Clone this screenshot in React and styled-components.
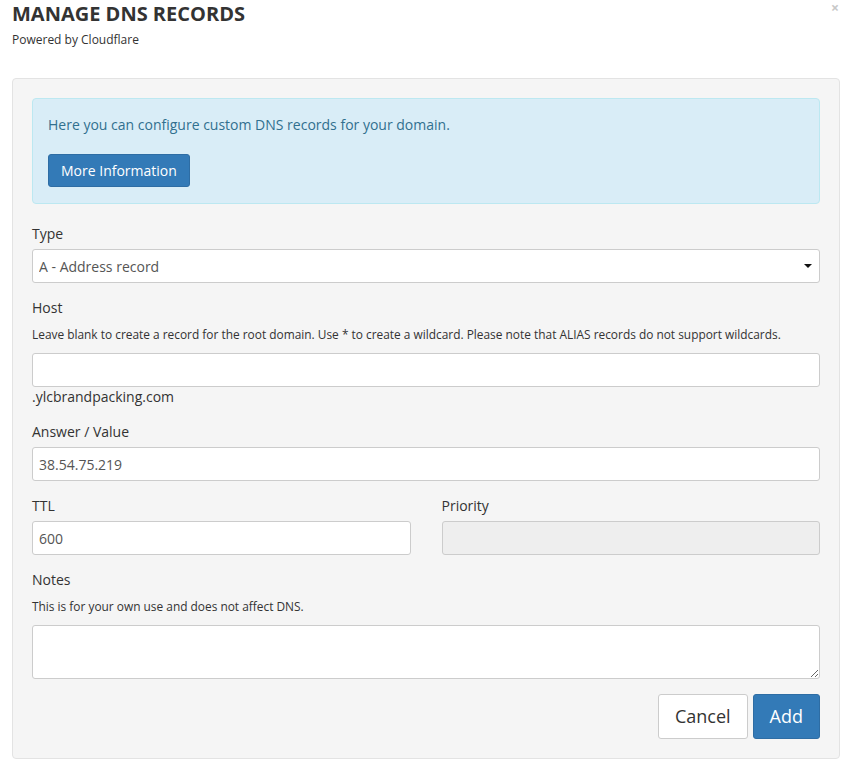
import React from 'react'
import styled, { createGlobalStyle } from 'styled-components'

const GlobalStyle = createGlobalStyle`
  html, body {
    margin: 0;
    padding: 0;
    background: #fff;
    font-family: "Open Sans", "Liberation Sans", sans-serif;
    color: #333;
  }
  * { box-sizing: border-box; }
`

const App = () => {
    return (<>
    <GlobalStyle />
    <Modal>
        <Header>
            <Title>MANAGE DNS RECORDS</Title>
            <SubTitle>Powered by Cloudflare</SubTitle>
            <Close>×</Close>
        </Header>
        <Panel>
            <Alert>
                <AlertText>Here you can configure custom DNS records for your domain.</AlertText>
                <Button primary>More Information</Button>
            </Alert>

            <Group>
                <Label>Type</Label>
                <SelectWrap>
                    <Select defaultValue="A">
                        <option value="A">A - Address record</option>
                        <option value="AAAA">AAAA - IPv6 address record</option>
                        <option value="CNAME">CNAME - Canonical name record</option>
                        <option value="MX">MX - Mail exchange record</option>
                        <option value="TXT">TXT - Text record</option>
                    </Select>
                </SelectWrap>
            </Group>

            <Group>
                <Label>Host</Label>
                <Help>Leave blank to create a record for the root domain. Use * to create a wildcard. Please note that ALIAS records do not support wildcards.</Help>
                <Input type="text" defaultValue="" />
                <Suffix>.ylcbrandpacking.com</Suffix>
            </Group>

            <Group>
                <Label>Answer / Value</Label>
                <Input type="text" defaultValue="38.54.75.219" />
            </Group>

            <Row>
                <Group>
                    <Label>TTL</Label>
                    <Input type="text" defaultValue="600" />
                </Group>
                <Group>
                    <Label>Priority</Label>
                    <Input type="text" disabled defaultValue="" />
                </Group>
            </Row>

            <Group>
                <Label>Notes</Label>
                <Help>This is for your own use and does not affect DNS.</Help>
                <TextArea />
            </Group>

            <Actions>
                <Button large>Cancel</Button>
                <Button large primary>Add</Button>
            </Actions>
        </Panel>
    </Modal>
    </>)
}
export default App

const Modal = styled.div`
    width: 850px;
    padding: 0 10px 0 12px;
`
const Header = styled.div`
    position: relative;
    height: 78px;
    padding-top: 1px;
`
const Title = styled.h1`
    margin: 0;
    font-size: 20px;
    line-height: 26px;
    font-weight: 700;
    color: #333;
`
const SubTitle = styled.div`
    margin-top: 4px;
    font-size: 12px;
    line-height: 17px;
    color: #333;
`
const Close = styled.span`
    position: absolute;
    right: 1px;
    top: 0;
    font-size: 14px;
    font-weight: 700;
    line-height: 16px;
    color: #c8c8c8;
`
const Panel = styled.div`
    background: #f5f5f5;
    border: 1px solid #e3e3e3;
    border-radius: 4px;
    padding: 19px;
    display: flex;
    flex-direction: column;
`
const Alert = styled.div`
    background: #d9edf7;
    border: 1px solid #bce8f1;
    border-radius: 4px;
    padding: 15px 15px 16px;
    margin-bottom: 20px;
    color: #31708f;
`
const AlertText = styled.p`
    margin: 1px 0 19px;
    font-size: 14px;
    line-height: 20px;
`
const Group = styled.div`
    display: flex;
    flex-direction: column;
    margin-bottom: 15px;
    min-width: 0;
`
const Row = styled.div`
    display: grid;
    grid-template-columns: 1fr 1fr;
    column-gap: 31px;
`
const Label = styled.label`
    font-size: 14px;
    line-height: 20px;
    margin-bottom: 5px;
    color: #333;
`
const Help = styled.p`
    margin: 3px 0 10px;
    font-size: 11.9px;
    line-height: 17px;
    color: #333;
`
const Input = styled.input`
    height: 34px;
    width: 100%;
    padding: 6px 6px;
    font-family: inherit;
    font-size: 14px;
    color: #555;
    background: #fff;
    border: 1px solid #ccc;
    border-radius: 3px;
    outline: none;
    &:disabled {
        background: #eee;
    }
`
const SelectWrap = styled.div`
    position: relative;
    &::after {
        content: '';
        position: absolute;
        right: 8px;
        top: 15px;
        border-left: 4px solid transparent;
        border-right: 4px solid transparent;
        border-top: 4px solid #111;
        pointer-events: none;
    }
`
const Select = styled.select`
    appearance: none;
    height: 34px;
    width: 100%;
    padding: 6px 6px;
    font-family: inherit;
    font-size: 14px;
    color: #555;
    background: #fff;
    border: 1px solid #ccc;
    border-radius: 3px;
    outline: none;
`
const Suffix = styled.div`
    font-size: 14px;
    line-height: 20px;
    color: #333;
`
const TextArea = styled.textarea`
    height: 54px;
    width: 100%;
    padding: 6px;
    font-family: inherit;
    font-size: 14px;
    background: #fff;
    border: 1px solid #ccc;
    border-radius: 3px;
    outline: none;
`
const Actions = styled.div`
    display: flex;
    justify-content: flex-end;
    gap: 5px;
`
const Button = styled.button`
    font-family: inherit;
    font-size: ${p => p.large ? '18px' : '14px'};
    line-height: ${p => p.large ? '25px' : '20px'};
    height: ${p => p.large ? '45px' : '33px'};
    padding: ${p => p.large ? '0 16px' : '0 12px'};
    align-self: flex-start;
    border-radius: 3px;
    border: 1px solid ${p => p.primary ? '#2e6da4' : '#ccc'};
    background: ${p => p.primary ? '#337ab7' : '#fff'};
    color: ${p => p.primary ? '#fff' : '#333'};
    cursor: pointer;
`
